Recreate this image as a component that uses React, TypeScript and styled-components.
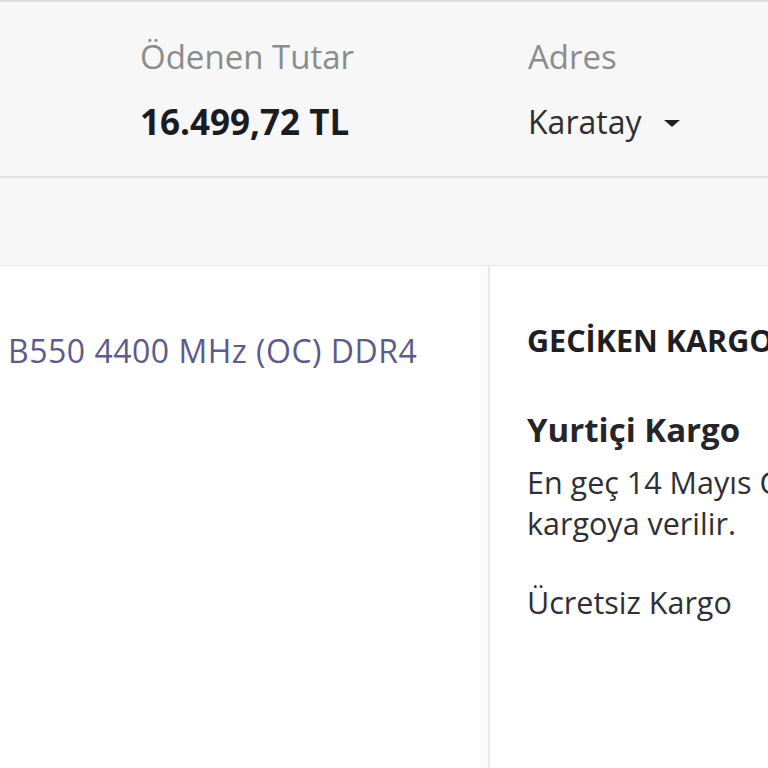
import styled, { createGlobalStyle } from 'styled-components';

const GlobalStyle = createGlobalStyle`
 html, body {
  margin: 0;
  padding: 0;
  background: #f6f6f6;
  font-family: 'Open Sans', 'Noto Sans', sans-serif;
  overflow: hidden;
 }
`;

const Page = styled.div`
 width: 768px;
 height: 768px;
 display: flex;
 flex-direction: column;
 overflow: hidden;
`;

const Summary = styled.header`
 display: flex;
 height: 178px;
 flex-shrink: 0;
 box-sizing: border-box;
 padding: 33px 0 0 140px;
 background: #f7f7f7;
 border-top: 2px solid #dedede;
 border-bottom: 2px solid #e2e2e2;
`;

const SummaryItem = styled.div<{ $width: number }>`
 display: flex;
 flex-direction: column;
 gap: 21px;
 width: ${({ $width }) => $width}px;
`;

const Label = styled.span`
 font-size: 33px;
 line-height: 44px;
 color: #8c8c8c;
 white-space: nowrap;
`;

const Amount = styled.span`
 font-size: 35px;
 line-height: 44px;
 font-weight: 700;
 color: #1b1b24;
 white-space: nowrap;
`;

const AddressSelect = styled.button`
 display: flex;
 align-items: center;
 gap: 23px;
 padding: 0;
 border: 0;
 background: none;
 font-family: inherit;
 font-size: 32px;
 line-height: 44px;
 color: #2e2e33;
 cursor: pointer;
`;

const Caret = styled.span`
 width: 0;
 height: 0;
 border-left: 8px solid transparent;
 border-right: 8px solid transparent;
 border-top: 7px solid #222;
 margin-top: 2px;
`;

const Band = styled.div`
 height: 87px;
 flex-shrink: 0;
 background: #f6f6f6;
`;

const Content = styled.div`
 flex: 1;
 display: flex;
 gap: 8px;
 background: #fbfbfb;
 border-top: 1px solid #e8e8e8;
`;

const ProductPanel = styled.section`
 width: 480px;
 flex-shrink: 0;
 background: #fff;
 padding: 63px 0 0 8px;
 box-sizing: border-box;
`;

const ProductName = styled.a`
 font-size: 32px;
 line-height: 44px;
 letter-spacing: 0.5px;
 color: #5e5a8c;
 text-decoration: none;
 white-space: nowrap;
`;

const CargoPanel = styled.aside`
 flex: 1;
 background: #fff;
 border-left: 2px solid #ebebeb;
 padding: 54px 0 0 37px;
 white-space: nowrap;
 overflow: hidden;
`;

const CargoTitle = styled.h3`
 margin: 0 0 48px;
 font-size: 30.5px;
 line-height: 40px;
 font-weight: 700;
 color: #1e1e24;
`;

const Carrier = styled.h4`
 margin: 0 0 10px;
 font-size: 33px;
 line-height: 44px;
 font-weight: 700;
 color: #25252b;
`;

const CargoText = styled.p<{ $gap?: number }>`
 margin: ${({ $gap }) => $gap ?? 0}px 0 0;
 font-size: 30.5px;
 line-height: 41px;
 color: #2f2f35;
`;

export default function App() {
 return (
  <Page>
   <GlobalStyle />
   <Summary>
    <SummaryItem $width={388}>
     <Label>Ödenen Tutar</Label>
     <Amount>16.499,72 TL</Amount>
    </SummaryItem>
    <SummaryItem $width={240}>
     <Label>Adres</Label>
     <AddressSelect type="button">
      Karatay
      <Caret />
     </AddressSelect>
    </SummaryItem>
   </Summary>
   <Band />
   <Content>
    <ProductPanel>
     <ProductName href="#">B550 4400 MHz (OC) DDR4</ProductName>
    </ProductPanel>
    <CargoPanel>
     <CargoTitle>GECİKEN KARGO</CargoTitle>
     <Carrier>Yurtiçi Kargo</Carrier>
     <CargoText>
      En geç 14 Mayıs Cuma günü
      <br />
      kargoya verilir.
     </CargoText>
     <CargoText $gap={38}>Ücretsiz Kargo</CargoText>
    </CargoPanel>
   </Content>
  </Page>
 );
}
